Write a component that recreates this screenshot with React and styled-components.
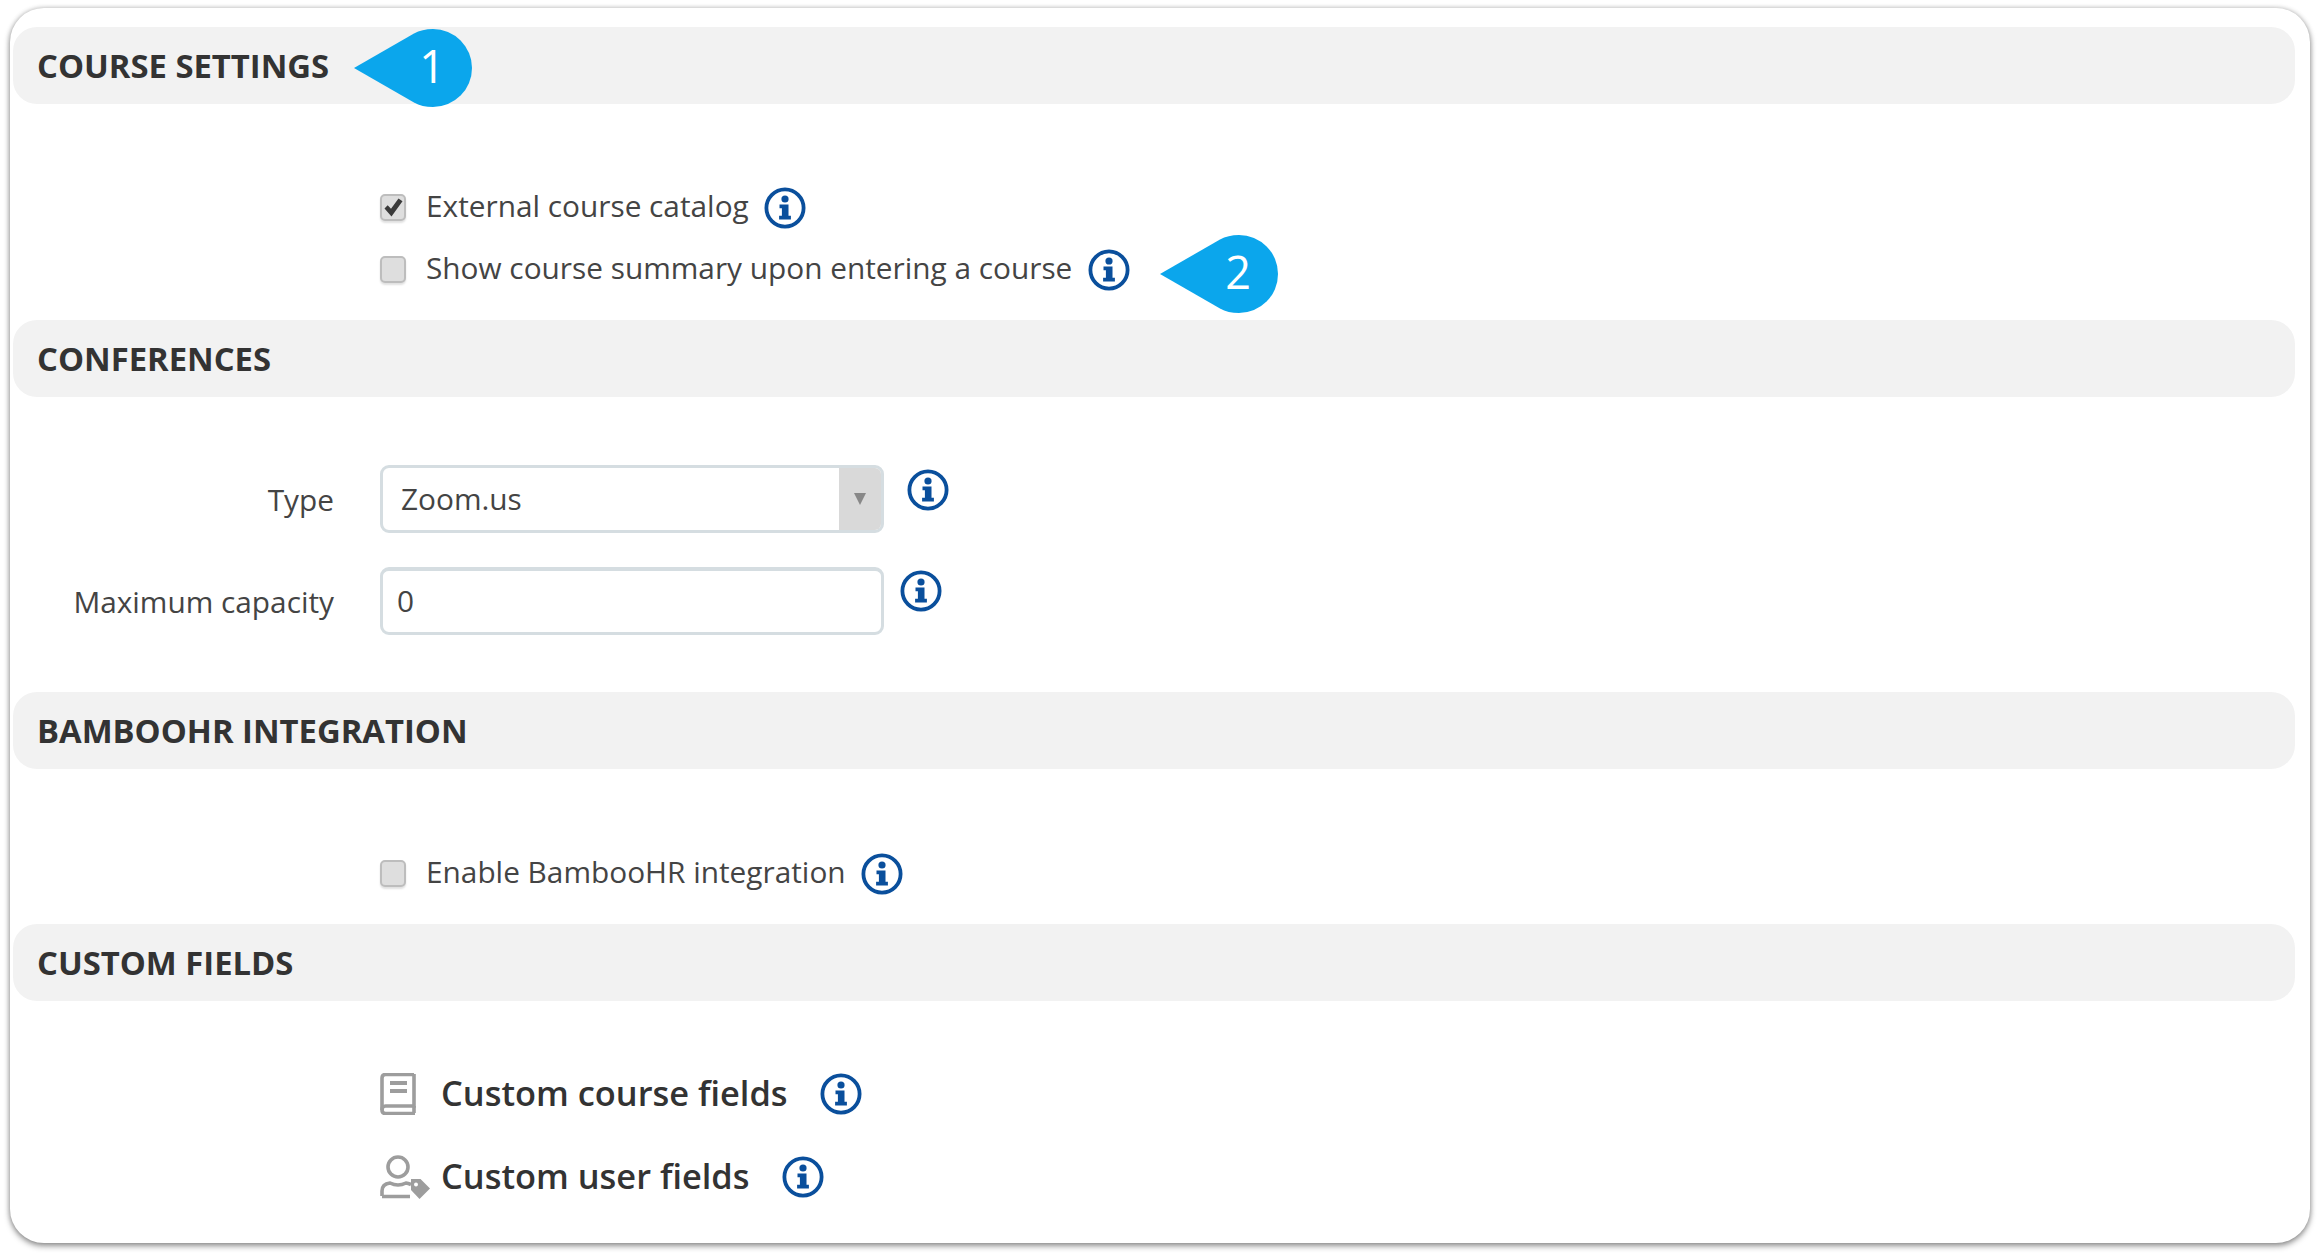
import React from "react";
import styled, { createGlobalStyle } from "styled-components";

const Global = createGlobalStyle`
  html, body { margin: 0; padding: 0; background: #fff; }
  body { font-family: "Open Sans", "Noto Sans", sans-serif; color: #333; }
  * { box-sizing: border-box; }
`;

const Page = styled.div`
  width: 2320px;
  height: 1255px;
  padding: 8px 10px 12px;
`;

const Card = styled.main`
  position: relative;
  width: 2300px;
  height: 1235px;
  padding: 19px 15px 0 3px;
  background: #fff;
  border-radius: 34px;
  box-shadow: 0 3px 6px rgba(0, 0, 0, 0.4), 0 0 5px rgba(0, 0, 0, 0.22);
`;

const SectionBar = styled.h2`
  display: flex;
  align-items: center;
  height: 77px;
  margin: 0;
  padding: 0 0 0 24px;
  background: #f2f2f2;
  border-radius: 24px;
  font-size: 32.8px;
  font-weight: 700;
  color: #333;
  text-transform: uppercase;
`;

const SectionBody = styled.section`
  height: ${(p) => p.$height}px;
  padding: ${(p) => p.$top}px 0 0 367px;
`;

const CheckRow = styled.div`
  display: flex;
  align-items: center;
  height: 62px;
`;

const Box = styled.span`
  display: flex;
  align-items: center;
  justify-content: center;
  flex: none;
  width: 26px;
  height: 27px;
  margin-right: 20px;
  background: #dedede;
  border: 2px solid #bdbdbd;
  border-radius: 5px;
  box-shadow: 0 2px 2px rgba(0, 0, 0, 0.12);
`;

const Label = styled.span`
  font-size: 29.8px;
  line-height: 40px;
  color: #444;
  white-space: nowrap;
  margin-top: -3px;
`;

const InfoWrap = styled.span`
  display: flex;
  flex: none;
  margin-left: ${(p) => p.$gap}px;
  margin-top: ${(p) => p.$dy || 0}px;
`;

const FieldRow = styled.div`
  display: flex;
  align-items: center;
  height: 68px;
  margin-bottom: ${(p) => p.$mb || 0}px;
  margin-left: -367px;
`;

const FieldLabel = styled.label`
  width: 321px;
  margin-right: 46px;
  text-align: right;
  font-size: 29.8px;
  color: #444;
  padding-top: 1px;
  white-space: nowrap;
`;

const Select = styled.div`
  display: flex;
  width: 504px;
  height: 68px;
  border: 3px solid #d5dde1;
  border-radius: 9px;
  background: #fff;
  overflow: hidden;
`;

const SelectValue = styled.span`
  flex: 1;
  display: flex;
  align-items: center;
  padding: 0 0 2px 18px;
  font-size: 29.8px;
  color: #444;
`;

const SelectArrow = styled.span`
  display: flex;
  align-items: center;
  justify-content: center;
  width: 42px;
  background: #d9d9d9;
  &::after {
    content: "";
    border-left: 6px solid transparent;
    border-right: 6px solid transparent;
    border-top: 12px solid #888;
  }
`;

const Input = styled.div`
  display: flex;
  align-items: center;
  width: 504px;
  height: 68px;
  padding: 0 0 2px 14px;
  border: 3px solid #d5dde1;
  border-top-width: 4px;
  border-radius: 9px;
  font-size: 29.8px;
  color: #444;
`;

const LinkRow = styled.div`
  display: flex;
  align-items: center;
  height: 83px;
`;

const IconSlot = styled.span`
  display: flex;
  flex: none;
  width: 61px;
`;

const LinkText = styled.span`
  font-size: 34.4px;
  font-weight: 600;
  color: #333;
  white-space: nowrap;
  margin-top: -2px;
`;

const Pin = styled.div`
  position: absolute;
  left: ${(p) => p.$x}px;
  top: ${(p) => p.$y}px;
  width: 118px;
  height: 78px;
`;

const PinNumber = styled.span`
  position: absolute;
  left: 39px;
  top: -3px;
  width: 78px;
  height: 78px;
  display: flex;
  align-items: center;
  justify-content: center;
  font-size: 45px;
  color: #fff;
`;

const Info = () => (
  <svg width="42" height="44" viewBox="0 0 42 44">
    <circle cx="21" cy="22" r="18.6" fill="#fff" stroke="#0a4f9c" strokeWidth="3.8" />
    <circle cx="21" cy="13" r="3.6" fill="#0a4f9c" />
    <path d="M15.500 18.500h9v11.200h2.400v3.800H15.100v-3.800h2.800v-7.400h-2.400z" fill="#0a4f9c" />
  </svg>
);

const Check = () => (
  <svg width="21" height="21" viewBox="0 0 21 21">
    <path d="M1.500 11.500l3.200-3.200 3.300 3.400L15.500 1.500l4 2.700L8.500 19.500z" fill="#3a3a3a" />
  </svg>
);

const BookIcon = () => (
  <svg width="36" height="42" viewBox="0 0 36 42" fill="none" stroke="#9d9d9d">
    <path d="M34 1.500H5.500Q2 1.500 2 5v32q0 3.500 3.500 3.500H35" strokeWidth="3.600" />
    <path d="M34 1v32H5.500Q2 33 2 37" strokeWidth="3.600" />
    <path d="M10 10h17M10 18h17" strokeWidth="4" />
    <path d="M34 33v7" strokeWidth="3.600" />
  </svg>
);

const UserTagIcon = () => (
  <svg width="50" height="44" viewBox="0 0 50 44" fill="none">
    <circle cx="18" cy="12" r="10" stroke="#9d9d9d" strokeWidth="3.600" />
    <path d="M2 41v-5q0-7 8-8 4 2 8 2t8-2q2 .2 5 1.500M2 41.500h28" stroke="#9d9d9d" strokeWidth="3.600" />
    <path d="M31 24h9.500L50 33.500 39.500 44 31 35z" fill="#9d9d9d" />
    <circle cx="36" cy="29.500" r="2" fill="#fff" />
  </svg>
);

const PinShape = () => (
  <svg width="118" height="78" viewBox="0 0 118 78">
    <path d="M0 39L60 4.500Q68 0 79 0a39 39 0 0 1 0 78Q68 78 60 73.500z" fill="#0ba6ec" />
  </svg>
);

const Marker = ({ x, y, n }) => (
  <Pin $x={x} $y={y}>
    <PinShape />
    <PinNumber>{n}</PinNumber>
  </Pin>
);

export default function App() {
  return (
    <Page>
      <Global />
      <Card>
        <SectionBar>Course settings</SectionBar>
        <SectionBody $height={216} $top={72}>
          <CheckRow>
            <Box><Check /></Box>
            <Label>External course catalog</Label>
            <InfoWrap $gap={15} $dy={2}><Info /></InfoWrap>
          </CheckRow>
          <CheckRow>
            <Box />
            <Label>Show course summary upon entering a course</Label>
            <InfoWrap $gap={16} $dy={2}><Info /></InfoWrap>
          </CheckRow>
        </SectionBody>

        <SectionBar>Conferences</SectionBar>
        <SectionBody $height={295} $top={68}>
          <FieldRow $mb={34}>
            <FieldLabel>Type</FieldLabel>
            <Select>
              <SelectValue>Zoom.us</SelectValue>
              <SelectArrow />
            </Select>
            <InfoWrap $gap={23} $dy={-18}><Info /></InfoWrap>
          </FieldRow>
          <FieldRow>
            <FieldLabel>Maximum capacity</FieldLabel>
            <Input>0</Input>
            <InfoWrap $gap={16} $dy={-20}><Info /></InfoWrap>
          </FieldRow>
        </SectionBody>

        <SectionBar>BambooHR integration</SectionBar>
        <SectionBody $height={155} $top={73}>
          <CheckRow>
            <Box />
            <Label>Enable BambooHR integration</Label>
            <InfoWrap $gap={15} $dy={2}><Info /></InfoWrap>
          </CheckRow>
        </SectionBody>

        <SectionBar>Custom fields</SectionBar>
        <SectionBody $height={233} $top={51}>
          <LinkRow>
            <IconSlot><BookIcon /></IconSlot>
            <LinkText>Custom course fields</LinkText>
            <InfoWrap $gap={32}><Info /></InfoWrap>
          </LinkRow>
          <LinkRow>
            <IconSlot><UserTagIcon /></IconSlot>
            <LinkText>Custom user fields</LinkText>
            <InfoWrap $gap={32}><Info /></InfoWrap>
          </LinkRow>
        </SectionBody>

        <Marker x={344} y={21} n="1" />
        <Marker x={1150} y={227} n="2" />
      </Card>
    </Page>
  );
}
